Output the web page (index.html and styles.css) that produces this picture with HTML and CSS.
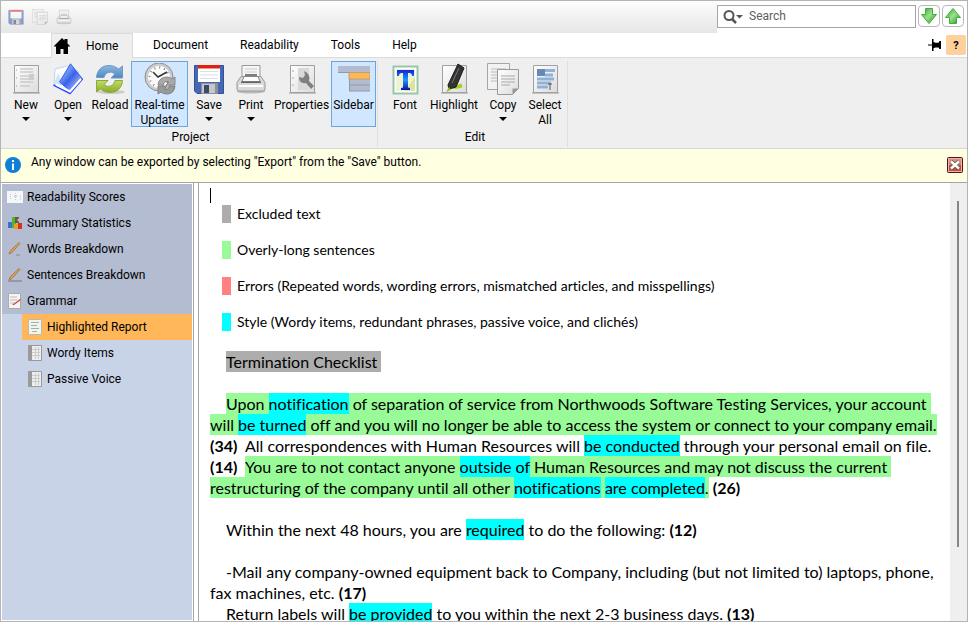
FILE: index.html
```html
<!DOCTYPE html>
<html lang="en">
<head>
<meta charset="utf-8">
<title>Readability project</title>
<link rel="stylesheet" href="styles.css">
</head>
<body>
<svg class="defs" aria-hidden="true">
  <defs>
    <linearGradient id="paper" x1="0" y1="0" x2="1" y2="1"><stop offset="0" stop-color="#fff"/><stop offset="1" stop-color="#dcdcdc"/></linearGradient>
    <linearGradient id="blue" x1="0" y1="0" x2="0" y2="1"><stop offset="0" stop-color="#8db9e4"/><stop offset="1" stop-color="#4f86bd"/></linearGradient>
    <linearGradient id="lime" x1="0" y1="0" x2="0" y2="1"><stop offset="0" stop-color="#c5dc6b"/><stop offset="1" stop-color="#86ab25"/></linearGradient>
    <linearGradient id="folder" x1="0" y1="0" x2="1" y2="1"><stop offset="0" stop-color="#3c50dc"/><stop offset=".3" stop-color="#6f9cf0"/><stop offset=".5" stop-color="#3a62ea"/><stop offset="1" stop-color="#d4e8ff"/></linearGradient>
    <linearGradient id="tee" x1="0" y1="0" x2="0" y2="1"><stop offset="0" stop-color="#1020d8"/><stop offset=".5" stop-color="#1c9cff"/><stop offset="1" stop-color="#1010a0"/></linearGradient>
    <linearGradient id="leaf" x1="0" y1="0" x2="1" y2="1"><stop offset="0" stop-color="#2fa52c"/><stop offset=".5" stop-color="#9be08a"/><stop offset="1" stop-color="#1c8e1c"/></linearGradient>
    <symbol id="floppy" viewBox="0 0 32 32">
      <path d="M1.500 2.500h29v28H4l-2.500-2.500z" fill="#4468b4" stroke="#34509a"/>
      <path d="M5 3h22v16H5z" fill="#fff"/><path d="M5 2h22v3.500H5z" fill="#e02010"/>
      <path d="M7 8.500h18M7 12h18M7 15.500h18" stroke="#dcdfe6"/>
      <path d="M8 20h17v11H8z" fill="#8d9094"/><path d="M9 21h13v9H9z" fill="#c4c7cb"/><path d="M11 22h5v8h-5z" fill="#3c4a66"/>
    </symbol>
    <symbol id="printer" viewBox="0 0 32 32">
      <ellipse cx="16" cy="28.500" rx="14" ry="2" fill="#bbb"/>
      <path d="M7 15V2.500h18V15z" fill="#f6f6f6" stroke="#999"/><path d="M10 6h12M10 9h12" stroke="#ccc"/><path d="M10 12h12" stroke="#555" stroke-width="1.500"/>
      <path d="M6 13.500h20l4 6v6.500q0 2-2 2H4q-2 0-2-2v-6.500z" fill="#d9d9d9" stroke="#999"/>
      <path d="M9 13.500h14l2 5H7z" fill="#fcfcfc" stroke="#888"/><path d="M6 18.500h20v1.500H6z" fill="#666"/><path d="M4 23h24" stroke="#fff" stroke-width="2"/>
    </symbol>
    <symbol id="pages" viewBox="0 0 32 32">
      <path d="M.5.5h22v26H.5z" fill="#f2f2f2" stroke="#a5a5a5"/><path d="M4 6h15M4 9h15M4 12h15M4 15h10M4 18h6" stroke="#bbb"/>
      <path d="M10.500 6.500h21v19l-6 6h-15z" fill="url(#paper)" stroke="#999"/><path d="M14 13h14M14 16h14M14 19h14M14 22h9" stroke="#a9a9a9"/><path d="M25.500 31.500v-6h6z" fill="#999"/>
    </symbol>
    <symbol id="sheet" viewBox="0 0 32 32">
      <path d="M3 29h27v2H3z" fill="#c2c2c2"/><path d="M4.500 2.500h24v27h-24z" fill="url(#paper)" stroke="#a0a0a0"/>
    </symbol>
    <symbol id="grid" viewBox="0 0 14 16">
      <path d="M.5.5h13v15H.5z" fill="#eee" stroke="#999"/><path d="M1 1h3v14H1z" fill="#999"/><path d="M4 4.500h8M4 7.500h8M4 10.500h8M7.500 2v12M10.500 2v12" stroke="#ccc"/>
    </symbol>
  </defs>
</svg>

<div class="window">
  <header class="titlebar">
    <div class="quick">
      <button type="button" aria-label="Save"><svg width="16" height="16"><use href="#floppy"/></svg></button>
      <button type="button" aria-label="Copy"><svg width="16" height="16"><use href="#pages"/></svg></button>
      <button type="button" aria-label="Print"><svg width="16" height="16"><use href="#printer"/></svg></button>
    </div>
    <div class="finder">
      <label class="search">
        <svg width="20" height="16" viewBox="0 0 20 16"><circle cx="6" cy="6.500" r="4.500" fill="none" stroke="#555" stroke-width="2"/><path d="M9 10l4 4" stroke="#555" stroke-width="2.500"/><path d="M13 6h7l-3.500 3.500z" fill="#555"/></svg>
        <input type="text" placeholder="Search" aria-label="Search">
      </label>
      <button type="button" class="step" aria-label="Next"><svg width="16" height="16" viewBox="0 0 16 16"><path d="M4.500.5h7v6h4L8 15.500.5 6.500h4z" fill="url(#leaf)" stroke="#3fae3a"/></svg></button>
      <button type="button" class="step" aria-label="Previous"><svg width="16" height="16" viewBox="0 0 16 16"><path d="M4.500 15.500h7v-6h4L8 .5.500 9.500h4z" fill="url(#leaf)" stroke="#3fae3a"/></svg></button>
    </div>
  </header>

  <nav class="tabs">
    <button type="button" class="tab active"><svg width="16" height="16" viewBox="0 0 16 16"><path d="M8 0l2.500 2.500V1h3v4.500L16 8l-1 1-1-1v8H9.500v-5h-3v5H2V8L1 9 0 8z"/></svg>Home</button>
    <button type="button" class="tab">Document</button>
    <button type="button" class="tab">Readability</button>
    <button type="button" class="tab">Tools</button>
    <button type="button" class="tab">Help</button>
    <div class="tools">
      <button type="button" class="pin" aria-label="Pin ribbon"><svg width="13" height="12" viewBox="0 0 13 12"><path d="M0 5.500h4V0h1.500v3l2 .8h3L11.500 2H13v8h-1.500l-1-1.500h-3l-2 .8v2.700H4V6.500H0z"/></svg></button>
      <button type="button" class="help">?</button>
    </div>
  </nav>

  <div class="ribbon">
    <section class="group">
      <div class="commands">
        <button type="button" class="cmd drop"><svg width="32" height="32" viewBox="0 0 32 32"><use href="#sheet"/><path d="M10 6h13M10 9h13M10 13h9M10 16h13M10 19h13M10 23h10" stroke="#b9b9b9"/><path d="M19 11h5v6h-5z" fill="#ccc"/><path d="M6 7h1M6 15h1M6 23h1" stroke="#999"/></svg>New</button>
        <button type="button" class="cmd drop"><svg width="32" height="32" viewBox="0 0 32 32"><path d="M3 6l12-3 12 6-9 20L2 23z" fill="#fafcfd" stroke="#c5d6e4"/><path d="M1.500 22L6 10l5 12z" fill="#cfe6fa"/><path d="M18.500.8L30.500 16 18 28 7.500 19z" fill="url(#folder)" stroke="#3d5cf0"/><path d="M1.500 22L18 30.500 30.500 16" fill="none" stroke="#2c48ff" stroke-width="1.500"/><path d="M4 21.500L18 28.500 29 16" fill="none" stroke="#fff" stroke-width="2"/></svg>Open</button>
        <button type="button" class="cmd"><svg width="32" height="32" viewBox="0 0 32 32"><ellipse cx="17" cy="29" rx="14" ry="2" fill="#ccc"/><path d="M2.500 14.500C3 7 8 2.500 15 2.500q6 0 9.500 3.500l4-3v12H17l4-4q-3-3-7-1.500-3.500 1.500-4 5z" fill="url(#blue)" stroke="#6c9ac8"/><path d="M28.500 17.500C28 25 23 29.500 16 29.500q-6 0-9.500-3.500l-4 3V17.500H14l-4 4q3 3 7 1.500 3.500-1.500 4-5.500z" fill="url(#lime)" stroke="#8aaa38"/></svg>Reload</button>
        <button type="button" class="cmd real on"><svg width="32" height="32" viewBox="0 0 32 32"><circle cx="15" cy="14" r="12.500" fill="#fbfbfb" stroke="#ccc" stroke-width="3"/><circle cx="15" cy="14" r="14" fill="none" stroke="#8f8f8f"/><circle cx="15" cy="14" r="9.500" fill="none" stroke="#777" stroke-width="2" stroke-dasharray="1 3.970"/><path d="M9 9l5 5 9-5" fill="none" stroke="#333" stroke-width="1.500"/><path d="M14 22q1-8 9-8 3 0 5 2l3-2v8h-9l3-3q-4-2-6 3z" fill="#aaa" stroke="#888"/><path d="M31 23q-1 8-8 8-4 0-6-2l-3 2v-8h9l-3 3q4 2 6-3z" fill="#999" stroke="#808080"/></svg>Real-time<br>Update</button>
        <button type="button" class="cmd drop"><svg width="32" height="32"><use href="#floppy"/></svg>Save</button>
        <button type="button" class="cmd drop"><svg width="32" height="32"><use href="#printer"/></svg>Print</button>
        <button type="button" class="cmd props"><svg width="32" height="32" viewBox="0 0 32 32"><use href="#sheet"/><path d="M12 5h11v22H12z" fill="#d9d9d9"/><path d="M18 8l1 4-2 3-4-1q0 7 7 6l5 6 3-3-5-5q2-7-5-10z" fill="#808080"/><path d="M6 8h2M6 15h2M6 22h2" stroke="#aaa"/></svg>Properties</button>
        <button type="button" class="cmd on"><svg width="32" height="32" viewBox="0 0 32 32"><path d="M0 3h32v7H0zM11 16h21v12H11z" fill="#b3bbcf"/><path d="M11 9.500h21V16H11z" fill="#ffb759" stroke="#c0a070"/><path d="M11.500 16v12M11 22h21M0 9.500h11M11 28h21" stroke="#9298a8"/></svg>Sidebar</button>
      </div>
      <h2>Project</h2>
    </section>
    <section class="group">
      <div class="commands">
        <button type="button" class="cmd"><svg width="32" height="32" viewBox="0 0 32 32"><path d="M4.500 3.500h24v27h-24z" fill="#fff" stroke="#9cc4aa" stroke-width="2"/><path d="M7 6h19v22H7z" fill="#edf5d0"/><path d="M16 28l10-14v14z" fill="#d6e6a0"/><path d="M8 7h17v6h-2q0-3-3-3h-1v14q0 1 2 1v2h-9v-2q2 0 2-1V10h-1q-3 0-3 3H8z" fill="url(#tee)"/></svg>Font</button>
        <button type="button" class="cmd high"><svg width="32" height="32" viewBox="0 0 32 32"><use href="#sheet"/><path d="M14 25l9-4 1 3q-5 2-10 1z" fill="#a8cf1b" stroke="#a8cf1b"/><path d="M20 1l6 4-8 19-7 2-1-4z" fill="#333" stroke="#1d1d1d"/><path d="M21 5L14 20" stroke="#777"/><path d="M11 24l2 3-5 2z" fill="#94c11f"/></svg>Highlight</button>
        <button type="button" class="cmd drop"><svg width="32" height="32"><use href="#pages"/></svg>Copy</button>
        <button type="button" class="cmd"><svg width="32" height="32" viewBox="0 0 32 32"><use href="#sheet"/><path d="M16 7.500h10M16 12h8M8 16h17M8 20h14M8 24h11" stroke="#91b1d9" stroke-width="3"/><path d="M8 6h8v7H8z" fill="#6889b4"/><path d="M19 21h4M21 21v6" stroke="#555"/></svg>Select<br>All</button>
      </div>
      <h2>Edit</h2>
    </section>
  </div>

  <div class="notice" role="status">
    <svg width="16" height="16" viewBox="0 0 16 16"><circle cx="8" cy="8" r="8" fill="#0f80d7"/><path d="M7 6.500h2V13H7zM7 3h2v2H7z" fill="#fff"/></svg>
    <p>Any window can be exported by selecting "Export" from the "Save" button.</p>
    <button type="button" aria-label="Dismiss"><svg width="16" height="16" viewBox="0 0 16 16"><rect x=".5" y=".5" width="15" height="15" rx="1" fill="#e08a7b" stroke="#4a1424"/><path d="M1.500 8h13v6.500h-13z" fill="#cb4a38"/><path d="M1.500 14.500v-13h13v13z" fill="none" stroke="#edb5ab"/><path d="M4 4.500l8 7M12 4.500l-8 7" stroke="#555" stroke-width="4"/><path d="M4 4.500l8 7M12 4.500l-8 7" stroke="#fff" stroke-width="2.500"/></svg></button>
  </div>

  <div class="body">
    <nav class="sidebar">
      <ul class="main">
        <li><a href="#scores"><svg width="16" height="16" viewBox="0 0 16 16"><path d="M0 2h16v12H0z" fill="#f5f6f8"/><path d="M3.500 5v6M8.500 4v8M13.500 6v5" stroke="#ccc" stroke-dasharray="1 1"/><path d="M7 6h3v2H7z" fill="#d5d5d5"/></svg>Readability Scores</a></li>
        <li><a href="#stats"><svg width="16" height="16" viewBox="0 0 16 16"><path d="M1 7h5v6H1z" fill="#3974c2"/><path d="M5 2h4v11H5z" fill="#4fb52e"/><path d="M8 2h4v1l-2 2 2 2v1H8z" fill="#6a5a35"/><path d="M7 9h4v5H7z" fill="#e8a020"/><path d="M11 8h4v6h-4z" fill="#d93020"/></svg>Summary Statistics</a></li>
        <li><a href="#words"><svg width="16" height="16" viewBox="0 0 16 16"><path d="M2 13l1.500-3.500L12 1.500l1 1-8 9z" fill="#dba45c" stroke="#a87c4c"/><path d="M9 14h4" stroke="#888"/></svg>Words Breakdown</a></li>
        <li><a href="#sentences"><svg width="16" height="16" viewBox="0 0 16 16"><path d="M2 13l1.500-3.500L12 1.500l1 1-8 9z" fill="#dba45c" stroke="#a87c4c"/><path d="M1 14h14" stroke="#777"/></svg>Sentences Breakdown</a></li>
        <li><a href="#grammar"><svg width="16" height="16" viewBox="0 0 16 16"><path d="M1.500.5h12v15h-12z" fill="#f4f4f4" stroke="#aaa"/><path d="M3 4h7M3 7h7M3 10h5" stroke="#bbb"/><path d="M5 12l8-6 1 1-7 5z" fill="#df4338"/></svg>Grammar</a></li>
      </ul>
      <ul class="sub">
        <li><a href="#report" class="current"><svg width="14" height="16" viewBox="0 0 14 16"><path d="M.5.5h13v15H.5z" fill="#f3f3ee" stroke="#bcb9b0"/><path d="M3 3.500h8M3 6.500h6M3 9.500h8M4 12.500h5" stroke="#9fb5a0"/></svg>Highlighted Report</a></li>
        <li><a href="#wordy"><svg width="14" height="16"><use href="#grid"/></svg>Wordy Items</a></li>
        <li><a href="#passive"><svg width="14" height="16"><use href="#grid"/></svg>Passive Voice</a></li>
      </ul>
    </nav>

    <main class="report">
      <article class="page">
        <div class="caret"></div>
        <ul class="legend">
          <li><i class="key excluded"></i>Excluded text</li>
          <li><i class="key long"></i>Overly-long sentences</li>
          <li><i class="key error"></i>Errors (Repeated words, wording errors, mismatched articles, and misspellings)</li>
          <li><i class="key style"></i>Style (Wordy items, redundant phrases, passive voice, and clichés)</li>
        </ul>
        <p><mark class="excluded">Termination Checklist&nbsp;</mark></p>
        <p><mark class="long">Upon <mark class="style">notification</mark> of separation of service from Northwoods Software Testing Services, your account&nbsp;<br>will <mark class="style">be turned</mark> off and you will no longer be able to access the system or connect to your company email.</mark><br><b>(34)</b>&nbsp; All correspondences with Human Resources will <mark class="style">be conducted</mark> through your personal email on file.<br><b>(14)</b>&nbsp; <mark class="long">You are to not contact anyone <mark class="style">outside of</mark> Human Resources and may not discuss the current&nbsp;<br>restructuring of the company until all other <mark class="style">notifications</mark> <mark class="style">are completed</mark>.</mark> <b>(26)</b></p>
        <p>Within the next 48 hours, you are <mark class="style">required</mark> to do the following: <b>(12)</b></p>
        <p>-Mail any company-owned equipment back to Company, including (but not limited to) laptops, phone,<br>fax machines, etc. <b>(17)</b></p>
        <p class="tight">Return labels will <mark class="style">be provided</mark> to you within the next 2-3 business days. <b>(13)</b></p>
      </article>
      <div class="scroll"><div class="thumb"></div></div>
    </main>
  </div>
</div>
</body>
</html>
```
FILE: styles.css
```css
* { box-sizing: border-box; }

body {
  margin: 0;
  font: 12px/15px Roboto, "Segoe UI", sans-serif;
  color: #000;
  background: #fff;
}

button {
  margin: 0;
  padding: 0;
  border: 0;
  background: none;
  font: inherit;
  color: inherit;
}

svg { display: block; flex: none; }
ul { margin: 0; padding: 0; list-style: none; }
.defs { position: absolute; width: 0; height: 0; }

.window {
  display: flex;
  flex-direction: column;
  height: 100vh;
  border: 1px solid #b4b4b4;
  overflow: hidden;
}

/* title bar */
.titlebar { display: flex; flex: none; height: 32px; }
.quick {
  display: flex;
  flex: 1;
  align-items: center;
  gap: 8px;
  padding-left: 7px;
  background: linear-gradient(#fdfdfd, #e6e6e6);
}
.quick svg { opacity: .6; }
.finder { display: flex; align-items: flex-start; gap: 2px; padding: 4px 3px 0 0; }
.search {
  display: flex;
  align-items: center;
  gap: 6px;
  width: 199px;
  height: 23px;
  padding: 0 5px;
  border: 1px solid #a5a5a5;
}
.search input {
  flex: 1;
  min-width: 0;
  padding: 0;
  border: 0;
  outline: 0;
  background: none;
  font: inherit;
}
.search input::placeholder { color: #606060; opacity: 1; }
.step {
  display: grid;
  place-items: center;
  width: 22px;
  height: 22px;
  border: 1px solid #b9b9b9;
  border-radius: 4px;
}

/* tabs */
.tabs {
  display: flex;
  flex: none;
  height: 25px;
  padding-left: 50px;
  border-bottom: 1px solid #dadada;
}
.tab { height: 25px; padding: 0 16px; }
.tab.active {
  display: flex;
  align-items: center;
  gap: 16px;
  width: 82px;
  padding: 0 0 0 2px;
  margin-right: 4px;
  border: 1px solid #dadada;
  border-bottom: 0;
  background: #efefef;
}
.tools { display: flex; align-items: center; gap: 5px; margin-left: auto; padding-right: 1px; }
.help {
  width: 20px;
  height: 20px;
  border-radius: 2px;
  background: #ffd09b;
  font-size: 11px;
  font-weight: 700;
}

/* ribbon */
.ribbon {
  display: flex;
  flex: none;
  height: 91px;
  padding-top: 3px;
  background: #efefef;
  border-bottom: 1px solid #d8d8d8;
}
.group {
  height: 86px;
  padding: 0 1px 0 4px;
  border-right: 1px solid #dfdfdf;
}
.group + .group { padding: 0 1px 0 6px; }
.commands { display: flex; }
.cmd {
  display: flex;
  flex-direction: column;
  align-items: center;
  min-width: 42px;
  height: 66px;
  padding: 1px 0 0;
  border: 1px solid transparent;
  white-space: nowrap;
}
.cmd svg { margin-bottom: 3px; }
.cmd.on { min-width: 45px; border-color: #66a7e0; background: #d1e7ff; }
.cmd.real { min-width: 57px; }
.cmd.high { min-width: 56px; }
.cmd.props { min-width: 59px; }
.cmd.drop::after {
  content: "";
  margin-top: 4px;
  border: 4px solid transparent;
  border-top-color: #000;
  border-bottom: 0;
}
.group h2 { margin: 3px 0 0; font: inherit; text-align: center; }

/* notice */
.notice {
  display: flex;
  flex: none;
  align-items: center;
  gap: 10px;
  height: 33px;
  padding: 0 4px 1px;
  background: #ffffe1;
}
.notice p { flex: 1; margin: 0 0 6px; }

/* body */
.body { display: flex; flex: 1; min-height: 0; border-top: 1px solid #a5a5a5; }
.sidebar {
  flex: none;
  width: 193px;
  padding: 1px;
  border-right: 1px solid #a5a5a5;
  display: flex;
  flex-direction: column;
}
.sidebar a {
  display: flex;
  align-items: center;
  gap: 4px;
  height: 26px;
  padding-left: 5px;
  line-height: 16px;
  color: #000;
  text-decoration: none;
}
.main { background: #b4bcd1; }
.sub { flex: 1; padding-left: 20px; background: #c8d3e8; }
.sub a { gap: 5px; padding-left: 6px; }
.sub .current { background: #ffb759; }

.report {
  display: flex;
  flex: 1;
  min-width: 0;
  margin-left: 4px;
  border-left: 1px solid #a5a5a5;
  background: #fff;
}
.page {
  flex: 1;
  min-width: 0;
  padding: 5px 0 0 11px;
  overflow: hidden;
  font: 16px/21px Lato, Calibri, sans-serif;
  font-variant-ligatures: none;
  white-space: nowrap;
}
.caret { width: 1px; height: 15px; background: #000; }
.legend { padding: 2px 0; margin-left: 12px; font-size: 14px; line-height: 18px; }
.legend li { display: flex; gap: 6px; margin-bottom: 18px; }
.key { width: 9px; height: 18px; }
.page p { margin: 0 0 21px; text-indent: 16px; }
.page p:has(+ .tight) { margin-bottom: 0; }
mark { padding: 1px 0; color: inherit; background: none; }
.excluded { background: #adadad; }
.long { background: #98fb98; }
.error { background: #ff8080; }
.style { background: #0ff; }

.scroll { flex: none; width: 17px; padding: 18px 7px 0; background: #efefef; }
.thumb { width: 2px; height: 346px; background: #868686; }
```
